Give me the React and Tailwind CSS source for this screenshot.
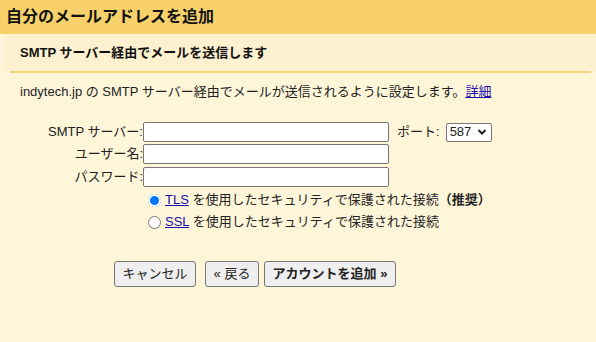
const font = "font-['Liberation_Sans','Noto_Sans_CJK_JP',sans-serif]";

const Field = ({ label, top, children }) => (
  <div className={`flex items-center h-[20px] ${top}`}>
    <span className="w-[123px] text-right whitespace-nowrap">{label}</span>
    <div className="w-[246px] h-[20px] bg-white border border-[#767676] rounded-[2px]" />
    {children}
  </div>
);

const Radio = ({ checked }) =>
  checked ? (
    <span className="w-[13px] h-[13px] rounded-full bg-[#0075ff] flex items-center justify-center">
      <span className="w-[9px] h-[9px] rounded-full bg-[#0075ff] border-[2px] border-white box-content" />
    </span>
  ) : (
    <span className="w-[13px] h-[13px] rounded-full bg-white border border-[#767676]" />
  );

export default function App() {
  return (
    <div className={`w-[596px] h-[342px] bg-[#fff6da] text-[#222] text-[13px] ${font}`}>
      <div className="h-[34px] bg-[#f9d16a] pl-[6px] flex items-center text-[16px] font-bold text-[#111]">
        自分のメールアドレスを追加
      </div>
      <div className="pl-[4px]">
        <div className="h-[37px] bg-[#fdf1cf] pl-[16px] flex items-center font-bold text-[#111]">
          SMTP サーバー経由でメールを送信します
        </div>
      </div>
      <div className="ml-[10px] w-[581px] h-[2px] bg-[#f6d67c]" />
      <div className="mt-[10px] h-[18px] pl-[20px] flex items-center whitespace-nowrap">
        indytech.jp の SMTP サーバー経由でメールが送信されるように設定します。
        <a href="#" className="text-[#1a0dab] underline">詳細</a>
      </div>

      <div className="mt-[21px] pl-[20px]">
        <Field label="SMTP サーバー:" top="">
          <span className="ml-[8px] whitespace-nowrap">ポート:</span>
          <div className="ml-[6px] w-[46px] h-[19px] bg-white border border-[#767676] rounded-[2px] flex items-center justify-between pl-[3px] pr-[4px]">
            <span>587</span>
            <svg width="10" height="8" viewBox="0 0 10 8">
              <path d="M1.5 2 L5 5.5 L8.5 2" fill="none" stroke="#222" strokeWidth="2" />
            </svg>
          </div>
        </Field>
        <Field label="ユーザー名:" top="mt-[2px]" />
        <Field label="パスワード:" top="mt-[3px]" />
      </div>

      <div className="mt-[2px] pl-[148px]">
        <div className="h-[22px] flex items-center whitespace-nowrap">
          <Radio checked />
          <span className="ml-[4px]">
            <a href="#" className="text-[#1a0dab] underline">TLS</a> を使用したセキュリティで保護された接続
            <b>（推奨）</b>
          </span>
        </div>
        <div className="h-[22px] flex items-center whitespace-nowrap">
          <Radio />
          <span className="ml-[4px]">
            <a href="#" className="text-[#1a0dab] underline">SSL</a> を使用したセキュリティで保護された接続
          </span>
        </div>
      </div>

      <div className="mt-[28px] pl-[114px] flex">
        <button className="w-[82px] h-[26px] bg-[#efefef] border border-[#767676] rounded-[3px]">
          キャンセル
        </button>
        <button className="ml-[9px] w-[54px] h-[26px] bg-[#efefef] border border-[#767676] rounded-[3px]">
          « 戻る
        </button>
        <button className="ml-[5px] w-[132px] h-[26px] bg-[#efefef] border border-[#767676] rounded-[3px] font-bold">
          アカウントを追加 »
        </button>
      </div>
    </div>
  );
}
